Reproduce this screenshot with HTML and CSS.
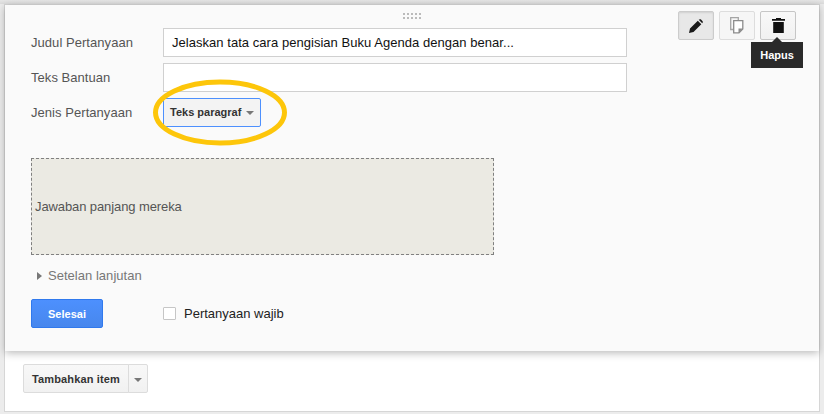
FILE: index.html
```html
<!DOCTYPE html>
<html lang="id">
<head>
<meta charset="utf-8">
<title>Formulir</title>
<link rel="stylesheet" href="styles.css">
</head>
<body>
<div class="frame">
  <section class="card">
    <div class="handle"><span class="grip"></span></div>
    <div class="top">
      <form class="fields">
        <div class="row"><label class="label">Judul Pertanyaan</label><div class="input">Jelaskan tata cara pengisian Buku Agenda dengan benar...</div></div>
        <div class="row"><label class="label">Teks Bantuan</label><div class="input"></div></div>
        <div class="row">
          <label class="label">Jenis Pertanyaan</label>
          <div class="select">Teks paragraf<span class="caret"></span>
            <svg class="ring" width="140" height="76" viewBox="0 0 140 76"><ellipse cx="72" cy="37.500" rx="64.500" ry="30.500" fill="none" stroke="#fdc60a" stroke-width="5"/></svg>
          </div>
        </div>
      </form>
      <div class="tools">
        <button class="tool tool-on" type="button"><svg width="14" height="14" viewBox="0 0 14 14"><path d="M0 14 1 9.500 8.800 1.700 12.300 5.200 4.500 13Z M9.700 .8C10.600 0 11.400 0 12 .6L13.400 2C14 2.600 14 3.400 13.200 4.300Z" fill="#1a1a1a"/></svg></button>
        <button class="tool tool-dim" type="button"><svg width="14" height="17" viewBox="0 0 14 17"><path d="M3 12.500H.7V.7H8.300V3" fill="none" stroke="#a5a5a5" stroke-width="1.300"/><path d="M3.700 3.700H12.800V12L9 15.800H3.700Z" fill="#fff" stroke="#8c8c8c" stroke-width="1.300"/><path d="M13 11.500H8.500V16Z" fill="#8c8c8c"/></svg></button>
        <button class="tool" type="button"><svg width="13" height="15" viewBox="0 0 13 15"><path d="M0 1H4V0H9V1H13V2.800H0Z M1.200 4H11.800V15H1.200Z" fill="#111"/></svg>
          <span class="tip">Hapus</span></button>
      </div>
    </div>
    <div class="answer">Jawaban panjang mereka</div>
    <div class="advanced"><span class="tri"></span>Setelan lanjutan</div>
    <div class="actions">
      <button class="done" type="button">Selesai</button>
      <label class="required"><span class="check"></span>Pertanyaan wajib</label>
    </div>
  </section>
  <div class="add">
    <button class="add-main" type="button">Tambahkan item</button><button class="add-more" type="button"><span class="caret"></span></button>
  </div>
</div>
</body>
</html>
```
FILE: styles.css
```css
* { box-sizing: border-box; }
html, body { margin: 0; height: 414px; overflow: hidden; }
body {
  background: linear-gradient(#e6e6e6, #dcdcdc 4px, #ececec 4px);
  padding: 4px 4px 2px 4px;
  font-family: "Liberation Sans", Arial, sans-serif;
  font-size: 13px;
  color: #222;
}
.frame {
  width: 816px;
  height: 408px;
  background: #fff;
  border: 1px solid #d6d6d6;
}
.card {
  height: 346px;
  width: 814px;
  padding: 0 0 0 26px;
  background: #fafafa;
  box-shadow: 0 2px 8px rgba(0,0,0,.28);
}
.handle { height: 6px; margin-left: -26px; display: flex; justify-content: center; align-items: flex-start; }
.grip {
  flex: none;
  width: 18px;
  height: 6px;
  margin-top: 8px;
  background: linear-gradient(#bbb 2px, transparent 2px) 0 0 / 4px 4px;
  -webkit-mask: linear-gradient(90deg, #000 2px, transparent 2px) 0 0 / 4px 4px;
  mask: linear-gradient(90deg, #000 2px, transparent 2px) 0 0 / 4px 4px;
}
.top { display: flex; align-items: flex-start; }
.fields { width: 596px; padding-top: 17px; flex: none; }
.row { display: flex; align-items: center; height: 29px; margin-bottom: 6px; }
.label { width: 132px; flex: none; color: #555; letter-spacing: .05px; }
.input {
  width: 464px;
  height: 29px;
  padding: 0 8px;
  line-height: 27px;
  background: #fff;
  border: 1px solid #d0d0d0;
  color: #111;
  letter-spacing: .04px;
}
.select {
  position: relative;
  width: 98px;
  height: 29px;
  padding-left: 6px;
  line-height: 27px;
  background: #f3f3f3;
  border: 1px solid #4d90fe;
  border-radius: 2px;
  font-size: 11px;
  font-weight: bold;
  color: #333;
}
.caret {
  display: inline-block;
  width: 0;
  height: 0;
  margin-left: 5px;
  vertical-align: middle;
  border: 4px solid transparent;
  border-top-color: #777;
  border-bottom: 0;
}
.ring { position: absolute; left: -16px; top: -24px; }
.tools { display: flex; gap: 5px; margin-left: 51px; }
.tool {
  position: relative;
  width: 36px;
  height: 29px;
  padding: 0;
  display: flex;
  align-items: center;
  justify-content: center;
  background: linear-gradient(#f8f8f8, #f1f1f1);
  border: 1px solid #c6c6c6;
  border-radius: 2px;
}
.tool-on { background: #e8e8e8; border-color: #ccc; box-shadow: inset 0 1px 2px rgba(0,0,0,.1); }
.tool-dim { background: #f6f6f6; border-color: #ddd; }
.tip {
  position: absolute;
  left: -10px;
  top: 30px;
  width: 52px;
  height: 26px;
  text-align: center;
  background: #2a2a2a;
  color: #fff;
  font: bold 11px/26px "Liberation Sans", Arial, sans-serif;
}
.tip::before {
  content: "";
  position: absolute;
  left: 21px;
  top: -5px;
  border: 5px solid transparent;
  border-top: 0;
  border-bottom-color: #2a2a2a;
}
.answer {
  width: 463px;
  height: 97px;
  margin-top: 25px;
  padding-left: 3px;
  line-height: 95px;
  background: #ebeae3;
  border: 1px dashed #808080;
  color: #555;
  letter-spacing: -.1px;
}
.advanced { height: 16px; margin: 13px 0 0 6px; line-height: 16px; color: #777; letter-spacing: .03px; display: flex; align-items: center; }
.tri { width: 0; height: 0; margin-right: 6px; border: 4px solid transparent; border-left: 5px solid #777; border-right: 0; }
.actions { display: flex; align-items: center; margin-top: 15px; }
.done {
  width: 72px;
  height: 29px;
  padding: 0;
  background: linear-gradient(#4d90fe, #4787ed);
  border: 1px solid #3079ed;
  border-radius: 2px;
  color: #fff;
  font: bold 11px "Liberation Sans", Arial, sans-serif;
}
.required { display: flex; align-items: center; margin-left: 60px; color: #222; }
.check { width: 13px; height: 13px; margin-right: 8px; background: #fff; border: 1px solid #c6c6c6; border-radius: 1px; }
.add { display: flex; margin: 13px 0 0 18px; }
.add-main, .add-more {
  height: 29px;
  padding: 0;
  background: linear-gradient(#f8f8f8, #f1f1f1);
  border: 1px solid #dcdcdc;
  color: #333;
  font: bold 11px "Liberation Sans", Arial, sans-serif;
}
.add-main { width: 106px; border-radius: 2px 0 0 2px; letter-spacing: .15px; }
.add-more { width: 20px; margin-left: -1px; border-radius: 0 2px 2px 0; }
.add-more .caret { margin: 0; }
```
